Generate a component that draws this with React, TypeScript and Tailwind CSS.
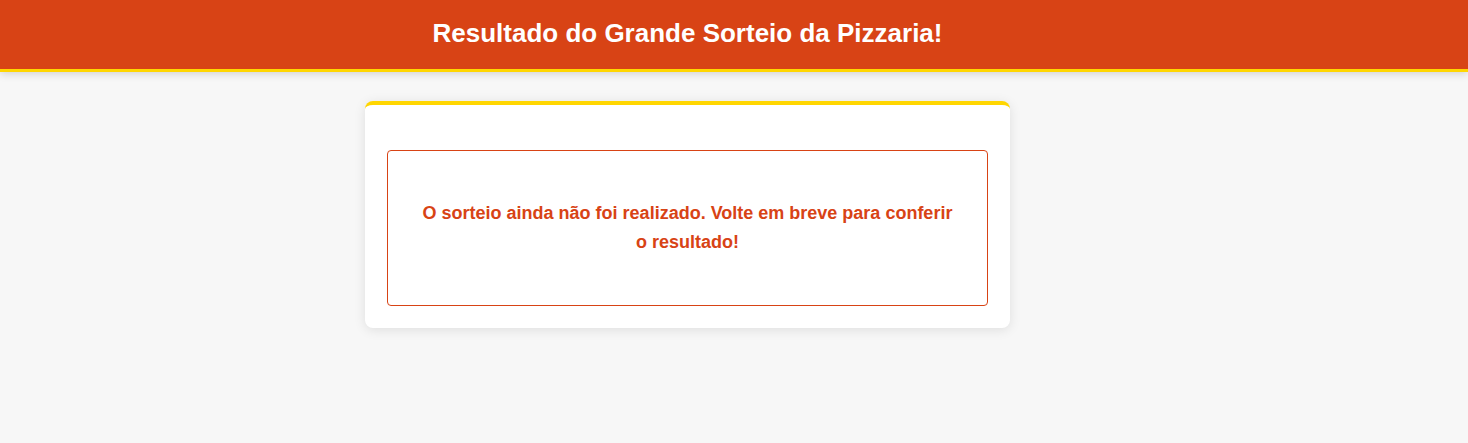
export default function App() {
  return (
    <div className="min-h-[443px] bg-[#f7f7f7]" style={{ fontFamily: '"Liberation Sans", Arial, sans-serif' }}>
      <header className="h-[72px] bg-[#d84315] border-b-[3px] border-[#ffd600] shadow-[0_2px_8px_rgba(0,0,0,0.15)] flex items-center justify-center pr-[93px] pb-[4px]">
        <h1 className="text-white text-[26px] font-bold leading-none">Resultado do Grande Sorteio da Pizzaria!</h1>
      </header>
      <main className="flex justify-center pr-[93px] pt-[29px]">
        <div className="w-[645px] bg-white rounded-[8px] border-t-4 border-[#ffd600] shadow-[0_2px_12px_rgba(0,0,0,0.1)] px-[22px] pt-[45px] pb-[22px]">
          <div className="border border-[#d84315] rounded-[4px] h-[156px] flex items-center justify-center px-[32px]">
            <p className="text-[#d84315] text-[18px] font-bold leading-[29px] text-center">
              O sorteio ainda não foi realizado. Volte em breve para conferir o resultado!
            </p>
          </div>
        </div>
      </main>
    </div>
  );
}
